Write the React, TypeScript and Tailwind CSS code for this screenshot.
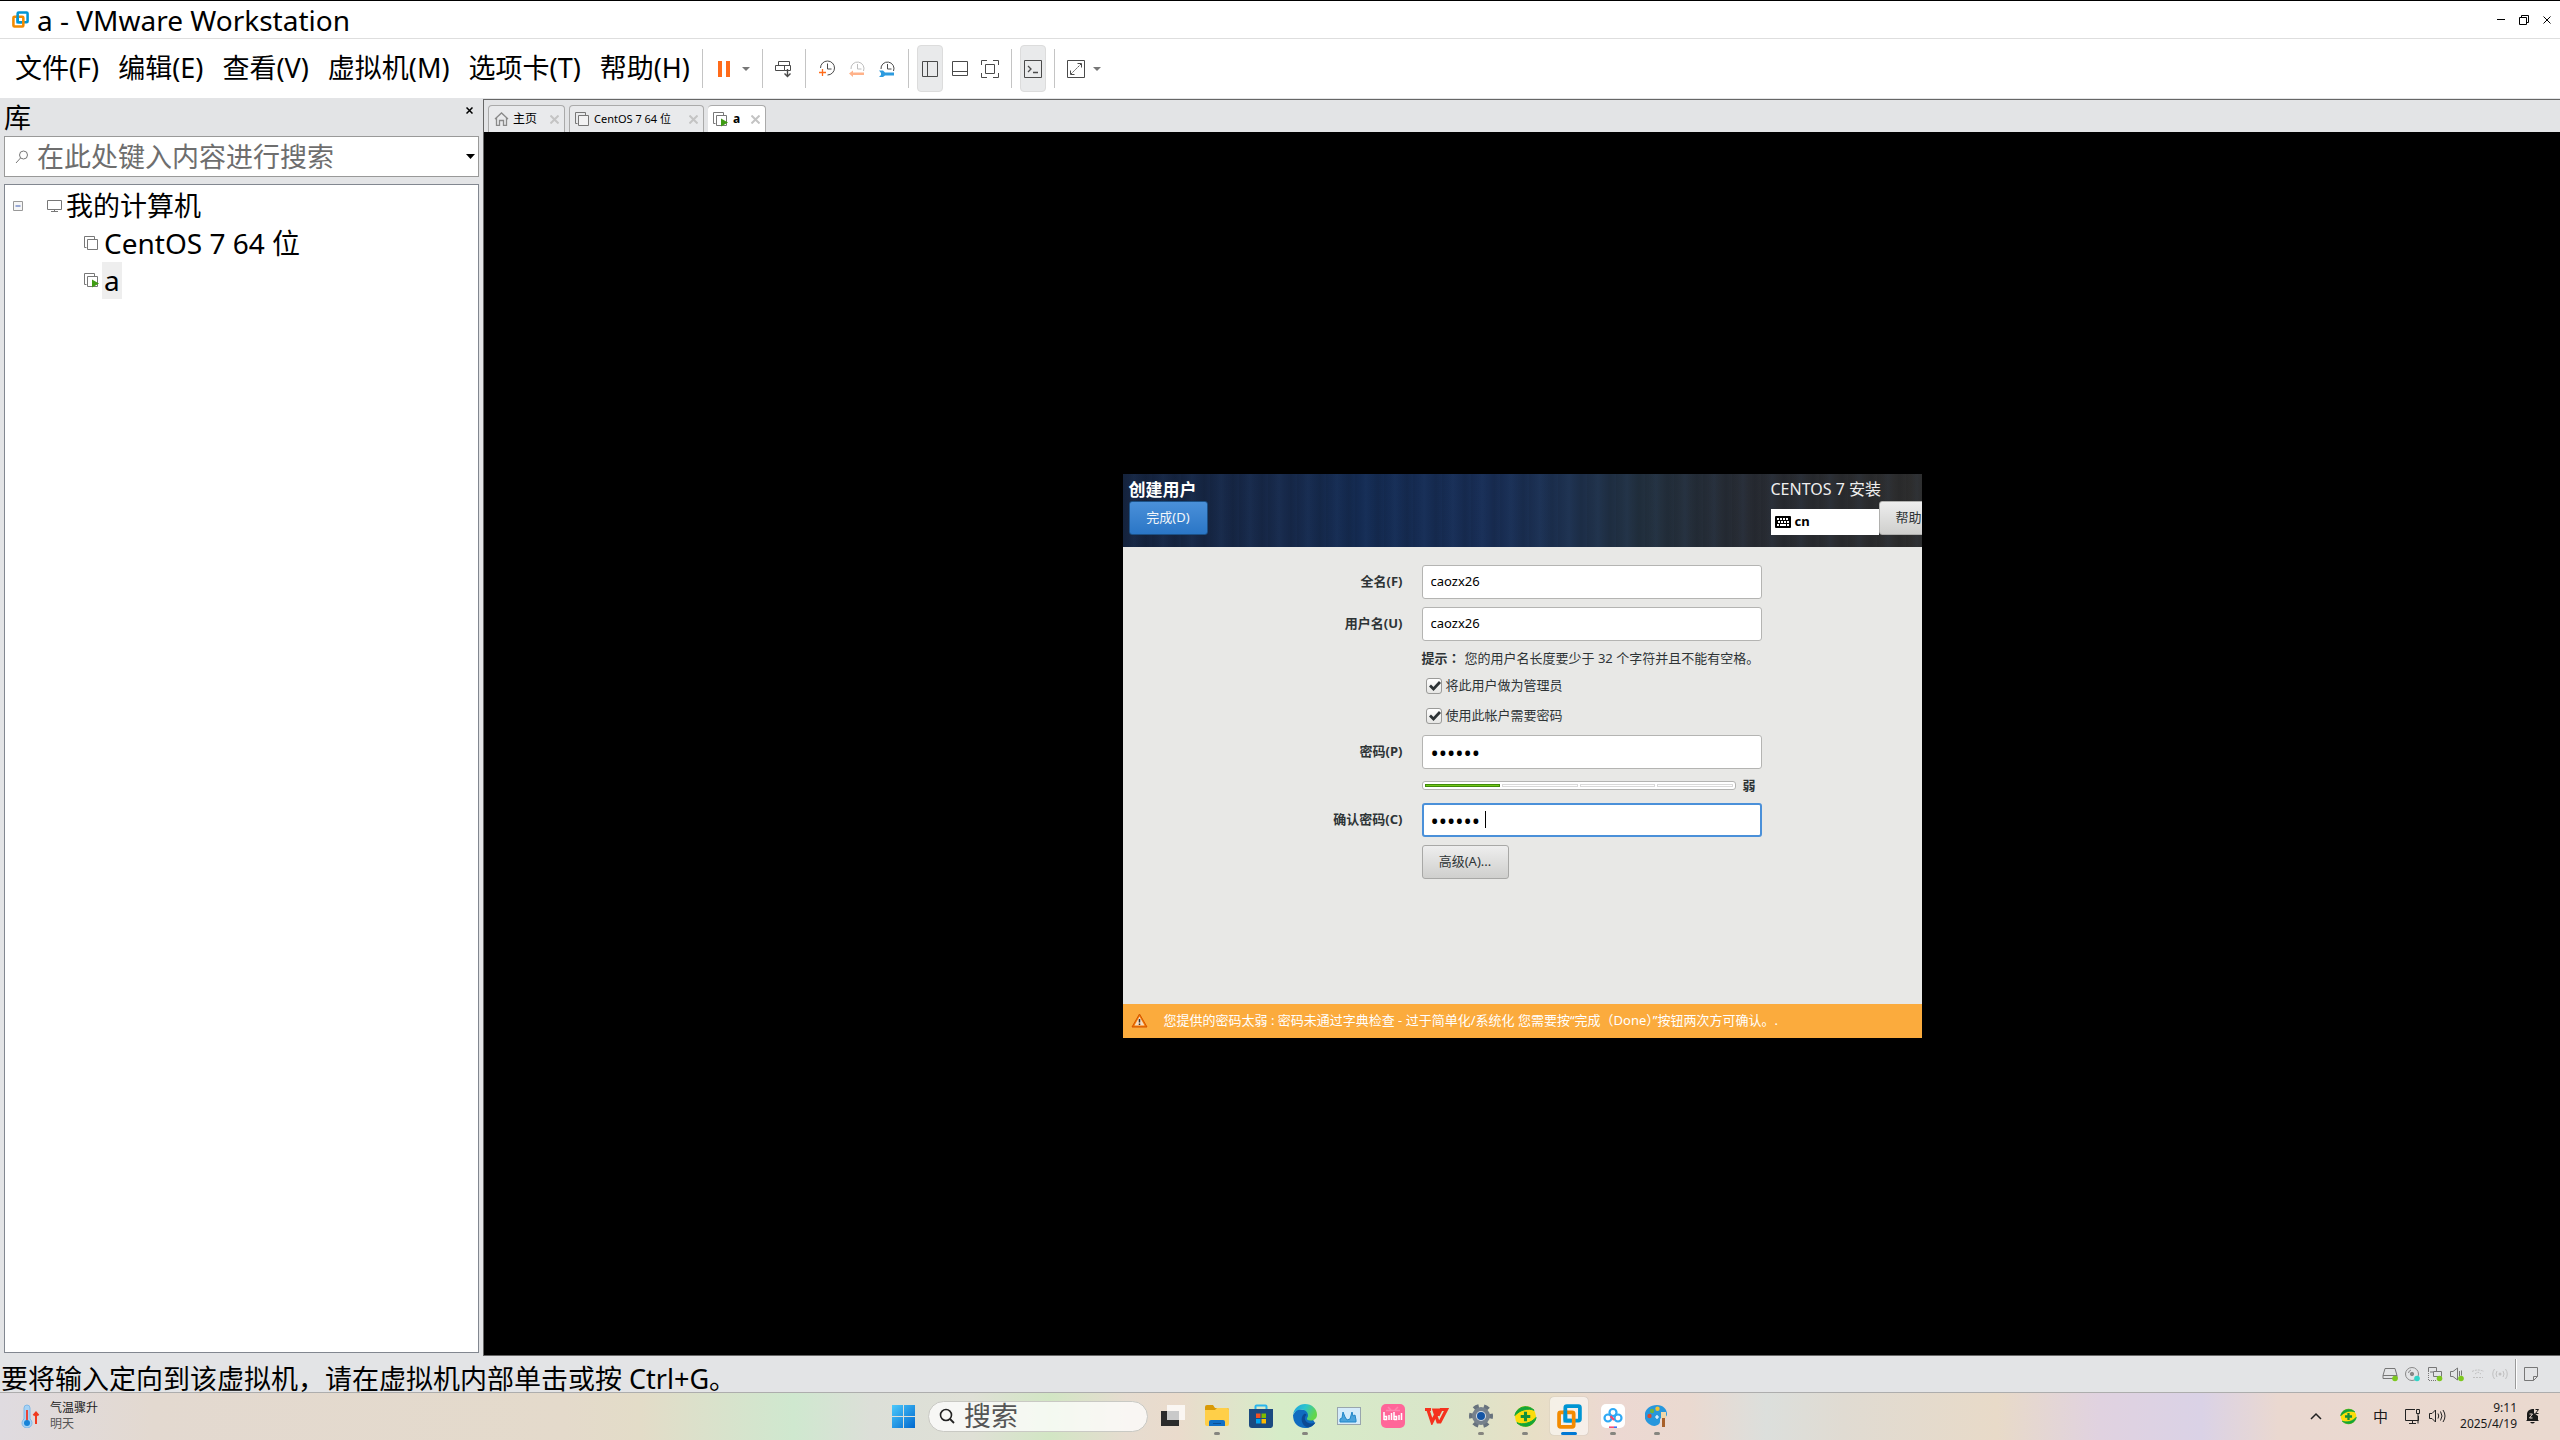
import React from "react";

type SvgProps = { children: React.ReactNode; w?: number; h?: number; vb?: string; className?: string };

function Icon({ children, w = 16, h = 16, vb, className = "" }: SvgProps) {
  return (
    <svg
      aria-hidden="true"
      width={w}
      height={h}
      viewBox={vb ?? `0 0 ${w} ${h}`}
      fill="none"
      stroke="#4a4a4a"
      className={`block shrink-0 ${className}`}
    >
      {children}
    </svg>
  );
}

function Separator() {
  return <div className="h-[39px] w-px bg-[#c4c4c4]" />;
}

function Caret() {
  return (
    <Icon w={8} h={4}>
      <path d="M0 0h8L4 4z" fill="#777" stroke="none" />
    </Icon>
  );
}

function VmwareLogo({ size }: { size: number }) {
  return (
    <Icon w={size} h={size} vb="0 0 24 24">
      <rect x="8" y="2" width="14" height="14" rx="1.5" stroke="#0095d3" strokeWidth="3.6" />
      <rect x="2" y="8" width="14" height="14" rx="1.5" stroke="#f38b00" strokeWidth="3.6" />
      <path d="M8 6v10h6" stroke="#0095d3" strokeWidth="3.6" />
    </Icon>
  );
}

function VmIcon({ running = false, size = 15 }: { running?: boolean; size?: number }) {
  return (
    <Icon w={size} h={size} vb="0 0 15 15">
      <path d="M2.500 11.500h-2V.500h10V3" stroke="#777" />
      <path d="M3.500 3.500h10v10h-10z" stroke="#777" fill="#fff" fillOpacity="0.4" />
      {running && <path d="M8 6.500v8l7-4z" fill="#3f9c14" stroke="none" />}
    </Icon>
  );
}

function MenuBar() {
  const items = ["文件(F)", "编辑(E)", "查看(V)", "虚拟机(M)", "选项卡(T)", "帮助(H)"];
  return (
    <nav className="flex items-center gap-[19px] pb-[2px] pl-[15px] text-[27px] leading-9">
      {items.map((t) => (
        <button key={t} type="button" className="whitespace-nowrap">
          {t}
        </button>
      ))}
    </nav>
  );
}

function Clock({ light = false }: { light?: boolean }) {
  return (
    <g stroke={light ? "#bdbdbd" : "#4a4a4a"}>
      <path d="M2 9a6.500 6.500 0 1 1 12.500 2" />
      <path d="M8.500 4v5h4" />
    </g>
  );
}

function Tool({ label, children, active = false }: { label: string; children: React.ReactNode; active?: boolean }) {
  return (
    <button
      type="button"
      aria-label={label}
      className={
        active
          ? "flex h-[47px] w-[26px] items-center justify-center rounded border border-[#dcdcdc] bg-[#e9eaeb]"
          : "flex h-[47px] w-[26px] items-center justify-center"
      }
    >
      {children}
    </button>
  );
}

function Toolbar() {
  return (
    <div className="ml-3 flex items-center">
      <Separator />
      <button type="button" aria-label="挂起" className="ml-[15px] flex gap-[4px]">
        <span className="h-4 w-[4px] bg-[#ff6b1a]" />
        <span className="h-4 w-[4px] bg-[#ff6b1a]" />
      </button>
      <button type="button" aria-label="电源选项" className="ml-3 mr-3">
        <Caret />
      </button>
      <Separator />
      <div className="px-2">
        <Tool label="发送 Ctrl+Alt+Del">
          <Icon w={17} h={18}>
            <path d="M3.500 1.500h11v4h-11zM.500 5.500h9v5h-9zM9.500 5.500h6v5h-6z" />
            <path d="M12.500 9v7.500M9.500 13.500l3 3 3-3" strokeWidth="1.400" />
          </Icon>
        </Tool>
      </div>
      <Separator />
      <div className="flex gap-1 px-2">
        <Tool label="拍摄快照">
          <Icon w={16} h={17}>
            <path d="M1.500 8a7 7 0 1 1 7 7" />
            <path d="M8.500 3.500V9h4" />
            <path d="M3.500 9v7M0 12.500h7" stroke="#ff6b1a" strokeWidth="1.300" />
          </Icon>
        </Tool>
        <Tool label="恢复快照">
          <Icon w={16} h={17}>
            <Clock light />
            <path d="M0 13.500L4 10.500v2h11v2.500H4v2z" fill="#ffb28a" stroke="none" />
          </Icon>
        </Tool>
        <Tool label="管理快照">
          <Icon w={16} h={17}>
            <Clock />
            <path d="M0 10.500h4l2 2h9v3H6l-2 1.500H0l2-2v-2z" fill="#2d9bdf" stroke="none" />
          </Icon>
        </Tool>
      </div>
      <Separator />
      <div className="flex gap-1 px-2">
        <Tool label="显示库" active>
          <Icon w={16} h={16}>
            <path d="M.500.500h15v15H.500zM5.500.500v15" />
          </Icon>
        </Tool>
        <Tool label="显示缩略图栏">
          <Icon w={16} h={16}>
            <path d="M.500.500h15v14H.500zM.500 10.500h15" />
          </Icon>
        </Tool>
        <Tool label="全屏">
          <Icon w={18} h={18}>
            <path d="M.500 5V.500H6M12 .500h5.500V5M17.500 13v4.500H12M6 17.500H.500V13M4.500 4.500h9v9h-9z" />
          </Icon>
        </Tool>
      </div>
      <Separator />
      <div className="px-2">
        <Tool label="控制台" active>
          <Icon w={18} h={18}>
            <path d="M.500.500h17v17H.500z" />
            <path d="M4 6l3 3-3 3M9 12.500h5" strokeWidth="1.300" />
          </Icon>
        </Tool>
      </div>
      <Separator />
      <div className="flex items-center pl-2">
        <Tool label="自由拉伸">
          <Icon w={18} h={18}>
            <path d="M.500.500h17v17H.500z" />
            <path d="M10.500 3.500h4v4M7.500 14.500h-4v-4" />
            <path d="M14 4L4 14" strokeDasharray="2 1" />
          </Icon>
        </Tool>
        <button type="button" aria-label="拉伸选项" className="ml-1">
          <Caret />
        </button>
      </div>
    </div>
  );
}

function Sidebar() {
  return (
    <aside className="flex w-[483px] shrink-0 flex-col bg-[#e3e4e6] pb-[3px] pl-1 pr-1">
      <div className="flex h-[38px] items-start justify-between pr-[6px] text-[27px]">
        <h2 className="leading-[40px]">库</h2>
        <button type="button" aria-label="关闭库" className="mt-[9px]">
          <Icon w={7} h={7}>
            <path d="M.500.500l6 6M6.500.500l-6 6" stroke="#000" strokeWidth="1.500" />
          </Icon>
        </button>
      </div>
      <div className="flex h-[41px] shrink-0 items-center border border-[#999] bg-white pl-[10px] pr-[3px]">
        <Icon w={14} h={14}>
          <circle cx="8.500" cy="5" r="4" stroke="#777" />
          <path d="M5.500 8L1 13" stroke="#777" />
        </Icon>
        <input
          aria-label="搜索库"
          placeholder="在此处键入内容进行搜索"
          className="ml-2 min-w-0 flex-1 bg-transparent text-[27px] leading-9 outline-none placeholder:text-[#6e6e6e]"
        />
        <button type="button" aria-label="搜索选项">
          <Icon w={9} h={5}>
            <path d="M0 0h9L4.500 5z" fill="#000" stroke="none" />
          </Icon>
        </button>
      </div>
      <ul className="mt-[7px] flex-1 border border-[#828790] bg-white pt-[2px] text-[27px] leading-[38px]">
        <li>
          <div className="flex items-center pl-2">
            <button type="button" aria-label="折叠">
              <Icon w={10} h={10}>
                <path d="M.500.500h9v9h-9z" stroke="#999" fill="#f6f6f6" />
                <path d="M2.500 5h5" stroke="#3b5bb5" />
              </Icon>
            </button>
            <Icon w={15} h={13} className="ml-6">
              <path d="M.500.500h14v9H.500zM7.500 9.500v2M4 11.500h7" stroke="#777" />
            </Icon>
            <span className="ml-1">我的计算机</span>
          </div>
          <ul className="pl-[79px] text-[28px] leading-[37px]">
            <li className="flex items-center">
              <VmIcon />
              <span className="ml-[3px] px-[2px]">CentOS 7 64 位</span>
            </li>
            <li className="flex items-center">
              <VmIcon running />
              <span className="ml-[3px] bg-[#eee] px-[2px]">a</span>
            </li>
          </ul>
        </li>
      </ul>
    </aside>
  );
}

function CloseX() {
  return (
    <Icon w={9} h={9}>
      <path d="M.500.500l8 8M8.500.500l-8 8" stroke="#c4c4c4" strokeWidth="2" />
    </Icon>
  );
}

function TabStrip() {
  return (
    <div className="flex h-[33px] shrink-0 items-end gap-1 border-l border-t border-[#666] bg-[#e3e4e6] pl-1 text-[12px]">
      <div className="flex h-[27px] w-[77px] items-center rounded-t border border-b-0 border-[#aaa] bg-[#e9eaec] px-[5px]">
        <Icon w={15} h={14}>
          <path d="M1 7L7.500 1 14 7M2.500 6v7.500h3V8.500h4v5h3V6" stroke="#8a8a8a" strokeWidth="1.300" />
        </Icon>
        <button type="button" className="ml-1 flex-1 text-left">主页</button>
        <button type="button" aria-label="关闭 主页"><CloseX /></button>
      </div>
      <div className="flex h-[27px] w-[135px] items-center rounded-t border border-b-0 border-[#aaa] bg-[#e9eaec] px-[5px]">
        <VmIcon />
        <button type="button" className="ml-1 flex-1 whitespace-nowrap text-left text-[11px]">CentOS 7 64 位</button>
        <button type="button" aria-label="关闭 CentOS 7 64 位"><CloseX /></button>
      </div>
      <div className="flex h-[27px] w-[58px] items-center rounded-t border border-b-0 border-l-0 border-[#aaa] bg-white px-[5px]">
        <VmIcon running />
        <button type="button" className="ml-[5px] flex-1 text-left font-bold">a</button>
        <button type="button" aria-label="关闭 a"><CloseX /></button>
      </div>
    </div>
  );
}

function FieldLabel({ id, children }: { id: string; children: React.ReactNode }) {
  return (
    <label htmlFor={id} className="pr-[19px] text-right font-bold">
      {children}
    </label>
  );
}

function CheckRow({ label }: { label: string }) {
  return (
    <label className="flex h-[30px] items-center gap-1 pl-1">
      <span className="relative block h-4 w-4">
        <input
          type="checkbox"
          defaultChecked
          className="block h-4 w-4 appearance-none rounded-[3px] border border-[#9a9a98] bg-linear-to-b from-white to-[#e6e6e4]"
        />
        <Icon w={16} h={16} className="pointer-events-none absolute inset-0">
          <path d="M4 7.500l3.500 3.500L14 4" stroke="#2e3436" strokeWidth="2.800" />
        </Icon>
      </span>
      {label}
    </label>
  );
}

const field =
  "block h-[34px] w-full rounded-[3px] border border-[#b4b4b2] bg-white px-2 pb-[2px] text-[13px] text-black outline-none";
const password =
  "block h-[34px] w-full rounded-[3px] border border-[#b4b4b2] bg-white px-2 text-[22px] text-black outline-none";
const passwordFocused =
  "block h-[34px] w-full rounded-[3px] border-2 border-[#4a90d9] bg-white px-[7px] text-[22px] text-black outline-none";

function Installer() {
  return (
    <section className="flex h-[564px] w-[799px] flex-col overflow-hidden bg-[#e8e8e6] text-[13px] text-[#2e3436]">
      <header className="flex h-[73px] shrink-0 justify-between bg-[repeating-linear-gradient(90deg,rgba(0,0,0,0.06)_0px,transparent_5px,rgba(80,130,200,0.05)_11px,transparent_17px,rgba(0,0,0,0.08)_23px,transparent_29px),linear-gradient(90deg,#15243f_0%,#17294a_20%,#142b52_30%,#182d54_46%,#1c3050_54%,#22303f_65%,#272b33_78%,#2d2d2d_100%)]">
        <div className="flex flex-col items-start pl-[6px] pt-1">
          <h1 className="text-[17px] font-bold leading-[23px] text-white">创建用户</h1>
          <button
            type="button"
            className="h-[34px] w-[79px] rounded-[3px] border border-[#1c5187] bg-linear-to-b from-[#4a90d9] to-[#2a76c6] text-[#f2f6fa]"
          >
            完成(D)
          </button>
        </div>
        <div className="w-[151px]">
          <h2 className="pt-1 text-[16px] leading-[23px] text-[#eee]">CENTOS 7 安装</h2>
          <div className="flex items-end">
            <button type="button" className="flex h-[26px] w-[108px] shrink-0 items-center gap-1 bg-white pl-1 font-bold text-black">
              <Icon w={16} h={12}>
                <rect width="16" height="12" rx="1" fill="#000" stroke="none" />
                <path
                  d="M2 2h2v2H2zM5 2h2v2H5zM8 2h2v2H8zM11 2h2v2h-2zM3 5h2v2H3zM6 5h2v2H6zM9 5h2v2H9zM12 5h2v2h-2zM2 8h2v2H2zM5 8h6v2H5zM12 8h2v2h-2z"
                  fill="#fff"
                  stroke="none"
                />
              </Icon>
              cn
            </button>
            <button
              type="button"
              className="h-[34px] w-[90px] shrink-0 rounded-[3px] border border-[#b0b0ae] bg-linear-to-b from-[#eee] to-[#cfcfcd] pl-4 text-left"
            >
              帮助
            </button>
          </div>
        </div>
      </header>
      <form className="grid flex-1 grid-cols-[299px_340px] content-start items-center pt-[18px]">
        <FieldLabel id="fullname">全名(F)</FieldLabel>
        <input id="fullname" defaultValue="caozx26" className={field} />
        <div className="col-span-2 h-2" />
        <FieldLabel id="username">用户名(U)</FieldLabel>
        <input id="username" defaultValue="caozx26" className={field} />
        <p className="col-start-2 h-[30px] whitespace-nowrap leading-[34px]">
          <b className="mr-1">
            提示<span className="font-['Noto_Sans_CJK_TC',sans-serif]">：</span>
          </b>
          您的用户名长度要少于 32 个字符并且不能有空格。
        </p>
        <div className="col-start-2">
          <CheckRow label="将此用户做为管理员" />
          <CheckRow label="使用此帐户需要密码" />
        </div>
        <div className="col-span-2 h-1" />
        <FieldLabel id="password">密码(P)</FieldLabel>
        <input id="password" type="password" defaultValue="caozx2" className={password} />
        <div className="col-start-2 flex h-[34px] items-center justify-between pr-[6px]">
          <div className="flex h-[9px] w-[314px] items-center gap-[2px] rounded-[3px] border border-[#b4b4b2] bg-white px-[2px]">
            <div className="h-[3px] flex-1 border border-[#3f8a0a] bg-[#73c818]" />
            <div className="h-[3px] flex-1 border border-[#d9d9d9]" />
            <div className="h-[3px] flex-1 border border-[#d9d9d9]" />
            <div className="h-[3px] flex-1 border border-[#d9d9d9]" />
          </div>
          <b>弱</b>
        </div>
        <FieldLabel id="confirm">确认密码(C)</FieldLabel>
        <div className="relative">
          <input id="confirm" type="password" defaultValue="caozx2" className={passwordFocused} />
          <span className="absolute left-[63px] top-2 h-[17px] w-px bg-black" />
        </div>
        <div className="col-start-2 pt-2">
          <button
            type="button"
            className="h-[34px] w-[87px] rounded-[3px] border border-[#a8a8a6] bg-linear-to-b from-[#eee] to-[#cfcfcd]"
          >
            高级(A)...
          </button>
        </div>
      </form>
      <footer className="flex h-[34px] shrink-0 items-center gap-4 bg-[#fbab3d] pl-2 text-white">
        <Icon w={17} h={15}>
          <path d="M8.500 1L16 14H1z" fill="#f57900" stroke="#d35400" strokeLinejoin="round" />
          <path d="M8.500 3.500L13.500 12.500h-10z" fill="#f7dcc0" stroke="none" />
          <path d="M8.500 6v3.500M8.500 10.500v1.500" stroke="#333" strokeWidth="1.500" />
        </Icon>
        <p className="whitespace-nowrap">
          您提供的密码太弱 : 密码未通过字典检查 - 过于简单化/系统化 您需要按“完成（Done）”按钮两次方可确认。.
        </p>
      </footer>
    </section>
  );
}

function StatusBar() {
  return (
    <div className="flex h-9 shrink-0 items-center justify-between bg-[#e3e4e6] pl-px pr-[22px]">
      <p className="pt-[10px] text-[27px] leading-9">要将输入定向到该虚拟机，请在虚拟机内部单击或按 Ctrl+G。</p>
      <div className="flex items-center gap-[7px]">
        <Icon w={16} h={16}>
          <path d="M3 2.500h10l2 7v3H1v-3zM1 9.500h14" stroke="#777" />
          <circle cx="13" cy="12.500" r="2.800" fill="#7dc81e" stroke="none" />
        </Icon>
        <Icon w={15} h={16}>
          <circle cx="7" cy="8" r="6.500" stroke="#888" />
          <circle cx="7" cy="8" r="1.700" fill="#888" stroke="#888" />
          <path d="M3.500 7a3.500 3.500 0 0 1 2.500-3" stroke="#888" />
          <circle cx="12" cy="12.500" r="2.800" fill="#30d5c8" stroke="none" />
        </Icon>
        <Icon w={16} h={16}>
          <path d="M1.500 6V1.500h8V5M6.500 5.500h8v5h-8zM3 6h3" stroke="#777" />
          <path d="M1.500 7v7.500H10" stroke="#777" strokeDasharray="1 1" />
          <circle cx="12.500" cy="12.500" r="2.800" fill="#7dc81e" stroke="none" />
        </Icon>
        <Icon w={14} h={16}>
          <path d="M.500 5.500h2.500L7.500 2v12L3 10.500H.500zM9.500 5v5M11.500 4.500v5" stroke="#777" />
          <circle cx="11" cy="12.500" r="2.800" fill="#7dc81e" stroke="none" />
        </Icon>
        <Icon w={14} h={16}>
          <path d="M1 5.500q6-3 12 0M4 8l3-2 3 2M2 11.500h10" stroke="#c0c0c0" strokeDasharray="2 1" />
        </Icon>
        <Icon w={16} h={16}>
          <circle cx="8" cy="8" r="1.500" fill="#c0c0c0" stroke="none" />
          <path d="M5 5q-2 3 0 6M2.500 3q-3.500 5 0 10M11 5q2 3 0 6M13.500 3q3.500 5 0 10" stroke="#c0c0c0" />
        </Icon>
        <div className="h-[30px] w-[2px] border-l border-[#999] bg-white" />
        <button type="button" aria-label="消息日志">
          <Icon w={14} h={14}>
            <path d="M.500.500h13v9l-4 4H.500zM13.500 9.500h-4v4" stroke="#777" />
          </Icon>
        </button>
      </div>
    </div>
  );
}

function Shield360({ size }: { size: number }) {
  return (
    <Icon w={size} h={size} vb="0 0 24 24">
      <circle cx="12" cy="12" r="11" fill="#fbdc0a" stroke="none" />
      <path d="M1 11C2 3 13-2 21 5.500 15 3 6 5 1 11z" fill="#13a538" stroke="#13a538" />
      <path d="M23 13c-1 8-12 13-20 5.500C9 21 18 19 23 13z" fill="#13a538" stroke="#13a538" />
      <path d="M12 7v10M7 12h10" stroke="#13903a" strokeWidth="3.200" />
    </Icon>
  );
}

function TaskItem({
  label,
  children,
  state = "idle",
}: {
  label: string;
  children: React.ReactNode;
  state?: "idle" | "open" | "active";
}) {
  return (
    <button
      type="button"
      aria-label={label}
      className={
        state === "active"
          ? "relative flex h-[38px] w-[38px] items-center justify-center rounded bg-white/55 shadow-[0_0_1px_#999]"
          : "relative flex h-[38px] w-[38px] items-center justify-center"
      }
    >
      {children}
      {state === "open" && <span className="absolute bottom-0 left-4 h-[3px] w-[6px] rounded-full bg-[#85857f]" />}
      {state === "active" && <span className="absolute bottom-0 left-[11px] h-[3px] w-4 rounded-full bg-[#0078d4]" />}
    </button>
  );
}

function Taskbar() {
  return (
    <footer className="grid h-12 shrink-0 grid-cols-[1fr_auto_1fr] items-center border-t border-[#adadad] bg-[linear-gradient(90deg,#dfdbe0_0%,#e3d9d0_6%,#e4dacb_22%,#e3dcc8_25%,#cfe8cf_31%,#dcdfd8_34%,#dfe0d6_38%,#d2e6c4_41%,#e6dcd0_44%,#eadbcc_46%,#d6ecc8_50%,#d9e6c9_56%,#e8dfc6_60%,#ecd8d2_63%,#ead9d0_66%,#dcdfdc_69%,#e0dbd2_72%,#e8dac8_78%,#e0d2e0_82%,#dad2e6_86%,#ead8d0_89%,#ead9cf_100%)] pb-px">
      <button type="button" className="flex items-center gap-[10px] pl-5 text-left text-[12px] leading-4">
        <Icon w={20} h={24}>
          <path d="M4 4a3 3 0 0 1 6 0v11a5 5 0 1 1-6 0z" fill="#a5d2f5" stroke="#7fb8e8" />
          <path d="M7 6v12" stroke="#e8463c" strokeWidth="2" />
          <circle cx="7" cy="19" r="3" fill="#1683d8" stroke="none" />
          <path d="M16 20V9M13.500 11.500L16 8.500l2.500 3" stroke="#f03a1f" strokeWidth="2" />
        </Icon>
        <span>
          <span className="block text-[#1a1a1a]">气温骤升</span>
          <span className="block text-[#555]">明天</span>
        </span>
      </button>

      <div className="flex items-center gap-[6px]">
        <TaskItem label="开始">
          <Icon w={23} h={23}>
            <defs>
              <linearGradient id="win" x1="0" y1="0" x2="1" y2="1">
                <stop offset="0" stopColor="#4cc9fb" />
                <stop offset="1" stopColor="#0068cf" />
              </linearGradient>
            </defs>
            <path d="M0 0h11v11H0zM12 0h11v11H12zM0 12h11v11H0zM12 12h11v11H12z" fill="url(#win)" stroke="none" />
          </Icon>
        </TaskItem>
        <label className="flex h-[31px] w-[220px] items-center gap-[9px] rounded-full border border-[#c9c9c4] bg-white/75 pl-[10px]">
          <Icon w={16} h={16}>
            <circle cx="7" cy="7" r="5.500" stroke="#222" strokeWidth="1.600" />
            <path d="M11 11l4 4" stroke="#222" strokeWidth="1.800" />
          </Icon>
          <input
            aria-label="搜索"
            placeholder="搜索"
            className="min-w-0 flex-1 bg-transparent text-[27px] leading-[30px] outline-none placeholder:text-[#555]"
          />
        </label>
        <TaskItem label="任务视图">
          <Icon w={24} h={24}>
            <path d="M0 7h18v15H0z" fill="#2b2b2b" stroke="none" />
            <path d="M6 1h18v15H6z" fill="#fff" fillOpacity="0.750" stroke="none" />
          </Icon>
        </TaskItem>
        <TaskItem label="文件资源管理器" state="open">
          <Icon w={24} h={24}>
            <path d="M0 3q0-2 2-2h6l2 3h12q2 0 2 2v8H0z" fill="#d99a06" stroke="none" />
            <path d="M0 6h10l2-2h10q2 0 2 2v14q0 2-2 2H2q-2 0-2-2z" fill="#ffcf48" stroke="none" />
            <path d="M4 22v-4q0-2 2-2h12q2 0 2 2v4z" fill="#0f6fc6" stroke="none" />
            <path d="M8 19.500h8" stroke="#0a4f94" />
          </Icon>
        </TaskItem>
        <TaskItem label="Microsoft Store">
          <Icon w={24} h={24}>
            <path d="M6.500 6V2.500q0-1 1-1h9q1 0 1 1V6" stroke="#29b6ee" strokeWidth="2" />
            <path d="M0 5h24v16q0 3-3 3H3q-3 0-3-3z" fill="#1b4a80" stroke="none" />
            <path d="M7 9.500h4.500V14H7z" fill="#f25022" stroke="none" />
            <path d="M12.500 9.500H17V14h-4.500z" fill="#7fba00" stroke="none" />
            <path d="M7 15h4.500v4.500H7z" fill="#00a4ef" stroke="none" />
            <path d="M12.500 15H17v4.500h-4.500z" fill="#ffb900" stroke="none" />
          </Icon>
        </TaskItem>
        <TaskItem label="Microsoft Edge" state="open">
          <Icon w={24} h={24}>
            <defs>
              <linearGradient id="edge" x1="0" y1="0" x2="1" y2="0.400">
                <stop offset="0" stopColor="#1c9fe0" />
                <stop offset="0.500" stopColor="#2cc4cf" />
                <stop offset="1" stopColor="#62d64a" />
              </linearGradient>
            </defs>
            <path d="M0 11c0 8 5 13 12 13 5 0 8-2 10-5L14 6 4 5z" fill="#0f6cc0" stroke="none" />
            <path d="M0 11C1 4 6 0 12 0c7 0 12 5 12 10.500 0 4-3 6-6.500 6-3 0-4-1-3.500-2.500 1-1 1-2 1-3C14.500 7 11 5.500 8 5.500 4 5.500 1 8 0 11z" fill="url(#edge)" stroke="none" />
            <path d="M11 10c-4 3-3 12 4 13.500 3-.5 6-2.500 7.500-5-4 2-9 1-10.500-3-.5-2 0-3.500 1.500-4.500-.5-1-1.500-1.500-2.500-1z" fill="#0b4a94" stroke="none" />
          </Icon>
        </TaskItem>
        <TaskItem label="性能监视器">
          <Icon w={24} h={18}>
            <rect x="0.500" y="0.500" width="23" height="17" fill="#d4ebfa" stroke="#98a5ae" />
            <path d="M3 15v-3l2-1 1-6 2 5 2 3 3-1 2-7 1 4 2-1 1 5v2z" fill="#4aa3dc" stroke="#2186c8" />
          </Icon>
        </TaskItem>
        <TaskItem label="哔哩哔哩">
          <Icon w={24} h={24}>
            <rect width="24" height="24" rx="5" fill="#ff6699" stroke="none" />
            <path d="M7 3l3 3M17 3l-3 3M5 6.500h14" stroke="#ff86ae" strokeWidth="1.500" />
            <path d="M3 8v8M3 12.500h2.500v3H3M8 11v5M10.500 9v7M13 8v8M13 12.500h2.500v3H13M18 11v5M20.500 9v7" stroke="#fff" strokeWidth="1.500" />
          </Icon>
        </TaskItem>
        <TaskItem label="WPS Office">
          <Icon w={24} h={18}>
            <path d="M0 2.500h6M3 3l4 12 6-12h-4l4 12h2l6.500-12.500H16l-3 6" stroke="#f5321e" strokeWidth="3.200" />
          </Icon>
        </TaskItem>
        <TaskItem label="设置" state="open">
          <Icon w={24} h={24}>
            <circle cx="12" cy="12" r="10" stroke="#67727d" strokeWidth="4" strokeDasharray="5.240 5.232" strokeDashoffset="2.600" />
            <circle cx="12" cy="12" r="7" fill="#d5dce4" stroke="#76818c" strokeWidth="4" />
            <circle cx="12" cy="12" r="4" fill="#1455a5" stroke="none" />
          </Icon>
        </TaskItem>
        <TaskItem label="360 安全卫士" state="open">
          <Shield360 size={23} />
        </TaskItem>
        <TaskItem label="VMware Workstation" state="active">
          <VmwareLogo size={25} />
        </TaskItem>
        <TaskItem label="百度网盘" state="open">
          <Icon w={24} h={24}>
            <rect width="24" height="24" rx="5" fill="#fff" stroke="none" />
            <circle cx="7" cy="14" r="3.500" stroke="#2fa9f5" strokeWidth="2.200" />
            <circle cx="17" cy="14" r="3.500" stroke="#2fa9f5" strokeWidth="2.200" />
            <circle cx="12" cy="8.500" r="3.500" stroke="#2fa9f5" strokeWidth="2.200" />
            <path d="M9.500 12L13 16" stroke="#f5456b" strokeWidth="2.200" />
            <path d="M8 23.200h5" stroke="#f5456b" strokeWidth="1.500" />
            <path d="M13 23.200h3" stroke="#2f6bf5" strokeWidth="1.500" />
          </Icon>
        </TaskItem>
        <TaskItem label="画图" state="open">
          <Icon w={24} h={24}>
            <path d="M12 1c6 0 10 4 10 9 0 4-4 3-6 4s0 4-2 6-6 3-10 0-5-7-4-11 5-8 12-8z" fill="#2797dd" stroke="none" />
            <circle cx="4.500" cy="12" r="2.200" fill="#d9492f" stroke="none" />
            <circle cx="7" cy="7" r="2.200" fill="#6db33f" stroke="none" />
            <circle cx="12.500" cy="4.800" r="2.200" fill="#f2c230" stroke="none" />
            <path d="M12 11v4M10 13h4" stroke="#fff" strokeWidth="1.200" />
            <path d="M18.500 13v10" stroke="#a8602a" strokeWidth="3" />
            <path d="M16 8h5v6h-5z" fill="#f0d6a8" stroke="none" />
          </Icon>
        </TaskItem>
      </div>

      <div className="flex items-center justify-end pr-5">
        <button type="button" aria-label="显示隐藏的图标" className="mr-[18px]">
          <Icon w={12} h={8}>
            <path d="M1 7l5-5 5 5" stroke="#222" strokeWidth="1.500" />
          </Icon>
        </button>
        <button type="button" aria-label="360"><Shield360 size={17} /></button>
        <button type="button" className="ml-4 text-[15px] text-[#1a1a1a]">中</button>
        <button type="button" aria-label="网络" className="ml-4">
          <Icon w={17} h={17}>
            <path d="M11 1.500H1.500v11h13V8M5 15.500h7M8.500 12.500v3M12.500 1.500h3v4h-3zM14 5.500v10" stroke="#222" />
          </Icon>
        </button>
        <button type="button" aria-label="音量" className="ml-2">
          <Icon w={17} h={16}>
            <path d="M.500 5.500H3L6.500 2v12L3 10.500H.500zM9 5.500q1.500 2.500 0 5M11.500 3.500q3 4.500 0 9M14 2q4 6 0 12" stroke="#222" />
          </Icon>
        </button>
        <button type="button" className="ml-[14px] text-right text-[12px] leading-4 text-[#1a1a1a]">
          <span className="block">9:11</span>
          <span className="block">2025/4/19</span>
        </button>
        <button type="button" aria-label="通知" className="ml-2">
          <Icon w={15} h={16}>
            <path d="M2 12V6q0-4 5-5h2v4l4 3v4l1 1H1zM5 14h5q-2.500 3-5 0z" fill="#1a1a1a" stroke="none" />
            <path d="M4.500 6h3l-3 4h3" stroke="#ead9cf" />
            <path d="M10.500 1.500h3l-3 4h3" stroke="#1a1a1a" />
          </Icon>
        </button>
      </div>
    </footer>
  );
}

export default function App() {
  return (
    <div className="flex h-screen flex-col overflow-hidden bg-white font-['Noto_Sans','Noto_Sans_CJK_SC',sans-serif] text-black">
      <header className="flex h-[39px] shrink-0 items-center border-b border-t border-b-[#dedede] border-t-black pl-3 pr-[9px]">
        <VmwareLogo size={17} />
        <h1 className="ml-2 flex-1 text-[28px] leading-9">a - VMware Workstation</h1>
        <div className="flex items-center gap-[14px]">
          <button type="button" aria-label="最小化">
            <Icon w={8} h={9}><path d="M0 4.500h8" stroke="#000" /></Icon>
          </button>
          <button type="button" aria-label="还原">
            <Icon w={10} h={10}>
              <path d="M.500 2.500h7v7h-7zM2.500 2V.500h7v7H8" stroke="#000" />
            </Icon>
          </button>
          <button type="button" aria-label="关闭">
            <Icon w={8} h={8}><path d="M.500.500l7 7M7.500.500l-7 7" stroke="#000" /></Icon>
          </button>
        </div>
      </header>
      <div className="flex h-[59px] shrink-0 items-center">
        <MenuBar />
        <Toolbar />
      </div>
      <main className="flex min-h-0 flex-1">
        <Sidebar />
        <div className="flex min-w-0 flex-1 flex-col border-t border-[#e3e4e6]">
          <TabStrip />
          <div className="flex min-h-0 flex-1 items-center justify-center border-b border-l border-[#666] bg-black pt-6">
            <Installer />
          </div>
        </div>
      </main>
      <StatusBar />
      <Taskbar />
    </div>
  );
}
